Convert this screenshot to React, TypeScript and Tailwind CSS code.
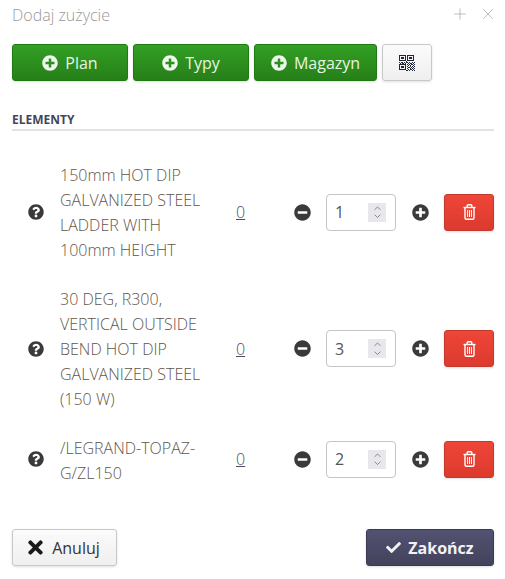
import { FaPlusCircle, FaMinusCircle, FaQuestionCircle, FaTimes, FaCheck } from 'react-icons/fa';
import { ChevronUp, ChevronDown, Plus, X } from 'lucide-react';

const items = [
  { name: ['150mm HOT DIP', 'GALVANIZED STEEL', 'LADDER WITH', '100mm HEIGHT'], qty: 1, lift: 'mb-[2px]' },
  { name: ['30 DEG, R300,', 'VERTICAL OUTSIDE', 'BEND HOT DIP', 'GALVANIZED STEEL', '(150 W)'], qty: 3, lift: 'mb-[2px]' },
  { name: ['/LEGRAND-TOPAZ-', 'G/ZL150'], qty: 2, lift: 'mb-[4px]' },
];

function QrIcon() {
  // mały kod QR
  const cells = [
    '1111111011111110',
    '1000001010000010',
    '1011101010111010',
    '1011101010111010',
    '1000001010000010',
    '1111111011111110',
    '0000000100000000',
    '1011010110100101',
    '0101101001011010',
    '1111111010101101',
    '1000001001010010',
    '1011101010010101',
    '1011101001101010',
    '1000001010010101',
    '1111111001011010',
    '0000000110100101',
  ];
  return (
    <svg width="16" height="16" viewBox="0 0 16 16" shapeRendering="crispEdges">
      {cells.map((row, y) =>
        row.split('').map((c, x) => (c === '1' ? <rect key={`${x}-${y}`} x={x} y={y} width="1" height="1" fill="#1f2937" /> : null))
      )}
    </svg>
  );
}

function TrashIcon() {
  return (
    <svg width="13" height="16" viewBox="0 0 13 16" fill="none" stroke="white" strokeWidth="1.4">
      <path d="M0.5 3.5h12" />
      <path d="M4.2 3.2V1.6c0-.5.4-.9.9-.9h2.8c.5 0 .9.4.9.9v1.6" />
      <path d="M2 3.5v10.3c0 .9.6 1.5 1.4 1.5h6.2c.8 0 1.4-.6 1.4-1.5V3.5" />
      <path d="M4.6 6v7M6.5 6v7M8.4 6v7" strokeWidth="1" />
    </svg>
  );
}

function GreenButton({ label, className }: { label: string; className: string }) {
  return (
    <button className={`${className} h-[37px] flex items-center justify-center gap-[7px] rounded-[3px] border border-[#1f7a12] bg-gradient-to-b from-[#33a024] to-[#267f18] text-[16px] text-[#e8f5e4] shadow-sm`}>
      <FaPlusCircle className="text-[16px] text-[#eef8ec]" />
      {label}
    </button>
  );
}

export default function App() {
  return (
    <div className="w-[505px] h-[579px] bg-white pl-[12px] pr-[11px] pt-[3px] font-['Open_Sans',sans-serif] overflow-hidden">
      {/* Nagłówek */}
      <div className="h-[24px] flex items-center justify-between">
        <h1 className="text-[16px] font-light text-[#999999]">Dodaj zużycie</h1>
        <div className="flex items-center gap-[10px] -mt-[2px] mr-[-3px] text-[#aaaaaa]">
          <Plus size={18} strokeWidth={1} />
          <X size={18} strokeWidth={1} />
        </div>
      </div>

      {/* Przyciski */}
      <div className="mt-[17px] flex gap-[5px]">
        <GreenButton label="Plan" className="w-[116px]" />
        <GreenButton label="Typy" className="w-[116px]" />
        <GreenButton label="Magazyn" className="w-[123px]" />
        <button className="w-[50px] h-[37px] flex items-center justify-center rounded-[3px] border border-[#c8c8c8] bg-gradient-to-b from-[#fbfbfb] to-[#efefef] shadow-sm">
          <QrIcon />
        </button>
      </div>

      {/* Elementy */}
      <div className="mt-[31px] border-b-2 border-[#e2e2e2] pb-[1px] text-[12px] leading-[16px] font-bold text-[#444659]">ELEMENTY</div>

      <div className="mt-[32px] flex flex-col gap-[24px]">
        {items.map((item, i) => (
          <div key={i} className="flex items-center">
            <FaQuestionCircle className={`ml-[16px] text-[16px] text-[#3a3a3a] shrink-0 ${item.lift}`} />
            <div className="ml-[16px] w-[177px] text-[16px] font-light leading-[25px] text-[#5f554c]">
              {item.name.map((line) => (
                <div key={line} className="whitespace-nowrap">{line}</div>
              ))}
            </div>
            <div className={`flex items-center ${item.lift}`}>
              <a className="ml-[-1px] w-[58px] text-[16px] font-light text-[#4f4a63] underline">0</a>
              <FaMinusCircle className="text-[17px] text-[#3a3a3a] shrink-0" />
              <div className="ml-[15px] w-[70px] h-[37px] flex items-center justify-between rounded-[4px] border border-[#c4c4c4] pl-[8px] pr-[9px] text-[16px] text-[#555555]">
                {item.qty}
                <div className="w-[18px] h-[19px] flex flex-col items-center justify-center bg-[#e8e8ec] text-[#77777f]">
                  <ChevronUp size={11} strokeWidth={2} className="-mb-[1px]" />
                  <ChevronDown size={11} strokeWidth={2} className="-mt-[1px]" />
                </div>
              </div>
              <FaPlusCircle className="ml-[16px] text-[17px] text-[#3a3a3a] shrink-0" />
              <button className="ml-[15px] w-[50px] h-[37px] flex items-center justify-center rounded-[3px] border border-[#c4382c] bg-gradient-to-b from-[#ee4638] to-[#dc3a2e] shadow-sm">
                <TrashIcon />
              </button>
            </div>
          </div>
        ))}
      </div>

      {/* Stopka */}
      <div className="mt-[43px] flex items-center justify-between">
        <button className="w-[105px] h-[37px] flex items-center justify-center gap-[6px] pr-[4px] rounded-[3px] border border-[#c8c8c8] bg-gradient-to-b from-[#fbfbfb] to-[#efefef] text-[16px] text-[#333333] shadow-sm">
          <FaTimes className="text-[21px] text-[#1a1a1a]" />
          Anuluj
        </button>
        <button className="w-[128px] h-[37px] flex items-center justify-center gap-[7px] rounded-[3px] border border-[#3a3a52] bg-gradient-to-b from-[#525272] to-[#43435c] text-[16px] font-bold text-[#f2f2f6] shadow-sm">
          <FaCheck className="text-[15px]" />
          Zakończ
        </button>
      </div>
    </div>
  );
}
